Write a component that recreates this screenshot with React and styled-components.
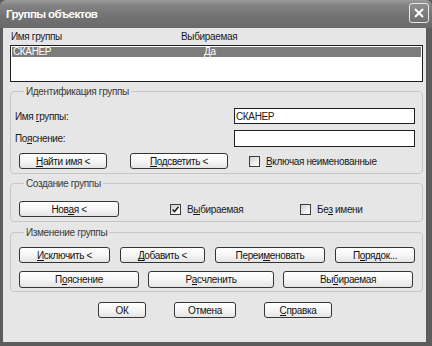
import React from "react";
import styled, { createGlobalStyle } from "styled-components";

const Global = createGlobalStyle`
  html, body {
    margin: 0;
    padding: 0;
    background: #ffffff;
  }
  body {
    font-family: "Liberation Sans", Arial, sans-serif;
    font-size: 10px;
    letter-spacing: -0.35px;
    color: #1a1a1a;
  }
`;

const Window = styled.div`
  width: 432px;
  height: 346px;
  box-sizing: border-box;
  background: #5c5c5c;
  padding: 0 6px 4px 3px;
  display: flex;
  flex-direction: column;
`;

const TitleBar = styled.div`
  height: 28px;
  margin: 0 -6px 0 -3px;
  padding: 0 3px 0 6px;
  display: flex;
  align-items: center;
  justify-content: space-between;
  background: linear-gradient(#9a9a9a 0%, #828282 20%, #727272 60%, #6a6a6a 100%);
  border-radius: 6px 6px 0 0;
`;

const Title = styled.div`
  color: #fff;
  font-weight: bold;
  font-size: 11.5px;
  letter-spacing: -0.6px;
`;

const CloseBtn = styled.div`
  width: 18px;
  height: 18px;
  border: 1px solid #e8e8e8;
  border-radius: 3px;
  background: linear-gradient(#8e8e8e, #6e6e6e);
  display: grid;
  place-items: center;
  margin-top: -2px;
`;

const Body = styled.div`
  flex: 1;
  background: #e6e6e6;
  padding: 0 3px 0 7px;
  display: flex;
  flex-direction: column;
`;

const ListHeader = styled.div`
  height: 17px;
  display: flex;
  align-items: center;
  padding-left: 1px;
`;

const Cell = styled.div`
  width: ${(p) => p.$w || "auto"};
`;

const ListBox = styled.div`
  height: 37px;
  box-sizing: border-box;
  border: 1px solid #1e1e1e;
  background: #fff;
  padding: 1px 1px;
`;

const Row = styled.div`
  height: 10px;
  display: flex;
  align-items: center;
  background: ${(p) => (p.$selected ? "#7c7c7c" : "transparent")};
  color: ${(p) => (p.$selected ? "#fff" : "#111")};
  padding-left: 1px;
  line-height: 10px;
`;

const Group = styled.fieldset`
  margin: ${(p) => p.$mt || "0"} 0 0 0;
  padding: ${(p) => p.$pad || "10px 7px 4px 8px"};
  border: 1px solid #c6c6c6;
  border-radius: 4px;
  min-width: 0;
  display: flex;
  flex-direction: column;
  gap: ${(p) => p.$gap || "6px"};
`;

const Legend = styled.legend`
  padding: 0 2px;
  margin-left: 5px;
  line-height: 13px;
  color: #3a3a3a;
`;

const FieldRow = styled.div`
  display: flex;
  align-items: center;
  justify-content: space-between;
  height: ${(p) => p.$h || "17px"};
`;

const Label = styled.label`
  margin-left: -4px;
`;

const Input = styled.div`
  width: 181px;
  height: 100%;
  box-sizing: border-box;
  border: 1px solid #1e1e1e;
  background: #fff;
  padding-left: 1px;
  display: flex;
  align-items: center;
`;

const BtnRow = styled.div`
  display: flex;
  align-items: center;
  height: ${(p) => p.$h || "16px"};
  gap: ${(p) => p.$gap || "10px"};
`;

const Button = styled.div`
  width: ${(p) => p.$w}px;
  height: 100%;
  box-sizing: border-box;
  border: 1px solid #353535;
  border-radius: 3px;
  background: linear-gradient(#ffffff 0%, #f6f6f6 50%, #e4e4e4 100%);
  display: flex;
  align-items: center;
  justify-content: center;
  flex-shrink: 0;
  color: #111;
  white-space: nowrap;
`;

const Check = styled.div`
  display: flex;
  align-items: center;
  gap: 6px;
  width: ${(p) => (p.$w ? `${p.$w}px` : "auto")};
  margin-left: ${(p) => p.$ml || 0}px;
  white-space: nowrap;
  flex-shrink: 0;
`;

const Box = styled.div`
  width: 11px;
  height: 11px;
  box-sizing: border-box;
  border: 1px solid #3c3c3c;
  background: linear-gradient(135deg, #cfcfcf, #f4f4f4 70%, #ffffff);
  display: grid;
  place-items: center;
`;

const Footer = styled.div`
  display: flex;
  justify-content: center;
  height: 16px;
  margin-top: 10px;
  gap: 28px;
  padding-right: 3px;
`;

const U = styled.span`
  display: inline-block;
  line-height: 9px;
  border-bottom: 1px solid currentColor;
`;

const CheckBox = ({ checked, children, ml, w }) => (
  <Check $ml={ml} $w={w}>
    <Box>
      {checked && (
        <svg width="9" height="9" viewBox="0 0 9 9">
          <path d="M1.5 4.5 L3.5 6.5 L7.5 1.8" stroke="#222" strokeWidth="1.6" fill="none" />
        </svg>
      )}
    </Box>
    <span>{children}</span>
  </Check>
);

export default function App() {
  return (
    <>
      <Global />
      <Window>
        <TitleBar>
          <Title>Группы объектов</Title>
          <CloseBtn>
            <svg width="12" height="12" viewBox="0 0 12 12">
              <path d="M2 2 L10 10 M10 2 L2 10" stroke="#fff" strokeWidth="2" />
            </svg>
          </CloseBtn>
        </TitleBar>
        <Body>
          <ListHeader>
            <Cell $w="170px">Имя группы</Cell>
            <Cell>Выбираемая</Cell>
          </ListHeader>
          <ListBox>
            <Row $selected>
              <Cell $w="191px">СКАНЕР</Cell>
              <Cell>Да</Cell>
            </Row>
          </ListBox>

          <Group $mt="3px">
            <Legend>Идентификация группы</Legend>
            <FieldRow $h="16px">
              <Label>
                Имя <U>г</U>руппы:
              </Label>
              <Input>СКАНЕР</Input>
            </FieldRow>
            <FieldRow>
              <Label>
                По<U>я</U>снение:
              </Label>
              <Input />
            </FieldRow>
            <BtnRow $gap="23px">
              <Button $w={88}>
                <span>
                  <U>Н</U>айти имя &lt;
                </span>
              </Button>
              <Button $w={98}>
                <span>
                  <U>П</U>одсветить &lt;
                </span>
              </Button>
              <CheckBox ml={-2}>
                <U>В</U>ключая неименованные
              </CheckBox>
            </BtnRow>
          </Group>

          <Group $mt="3px" $pad="11px 7px 4px 8px">
            <Legend>Создание группы</Legend>
            <BtnRow $gap="0">
              <Button $w={100}>
                <span>
                  Нов<U>а</U>я &lt;
                </span>
              </Button>
              <CheckBox checked ml={51} w={130}>
                В<U>ы</U>бираемая
              </CheckBox>
              <CheckBox>
                Бе<U>з</U> имени
              </CheckBox>
            </BtnRow>
          </Group>

          <Group $mt="4px" $pad="8px 7px 3px 8px" $gap="8px">
            <Legend>Изменение группы</Legend>
            <BtnRow $gap="10px">
              <Button $w={91}>
                <span>
                  <U>И</U>сключить &lt;
                </span>
              </Button>
              <Button $w={85}>
                <span>
                  <U>Д</U>обавить &lt;
                </span>
              </Button>
              <Button $w={110}>
                <span>
                  Переи<U>м</U>еновать
                </span>
              </Button>
              <Button $w={80}>
                <span>
                  П<U>о</U>рядок...
                </span>
              </Button>
            </BtnRow>
            <BtnRow $h="17px" $gap="9px">
              <Button $w={120}>
                <span>
                  П<U>о</U>яснение
                </span>
              </Button>
              <Button $w={126}>
                <span>
                  Р<U>а</U>счленить
                </span>
              </Button>
              <Button $w={130}>
                <span>
                  Вы<U>б</U>ираемая
                </span>
              </Button>
            </BtnRow>
          </Group>

          <Footer>
            <Button $w={48}>ОК</Button>
            <Button $w={62}>Отмена</Button>
            <Button $w={68}>
              <span>
                <U>С</U>правка
              </span>
            </Button>
          </Footer>
        </Body>
      </Window>
    </>
  );
}
